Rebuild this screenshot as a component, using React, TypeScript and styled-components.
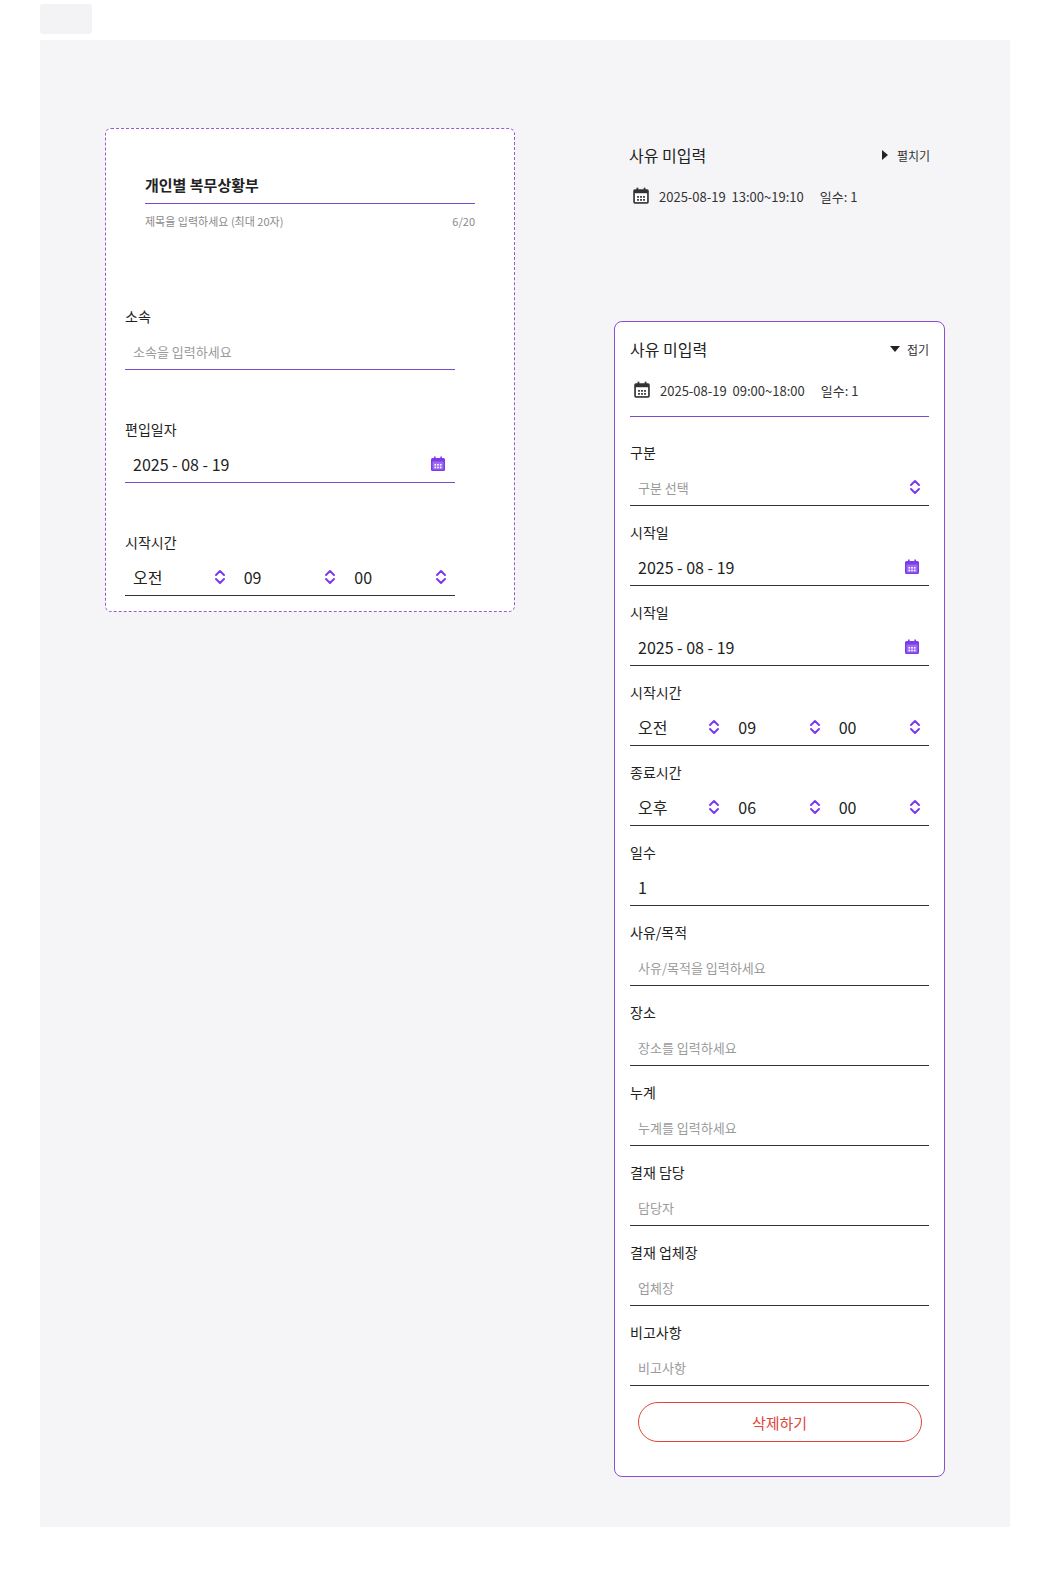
import styled, { createGlobalStyle } from 'styled-components';

const GlobalStyle = createGlobalStyle`
  html, body { overflow: hidden; }
  body {
    margin: 0;
    background: #fff;
    font-family: "Noto Sans CJK KR", "Noto Sans", sans-serif;
    color: #222;
  }
`;

const Page = styled.div`
  width: 1062px;
  padding: 4px 0 0 40px;
  box-sizing: border-box;
`;

const Tab = styled.div`
  width: 52px;
  height: 30px;
  background: #f3f3f6;
  border-radius: 3px;
  margin-bottom: 6px;
`;

const Canvas = styled.div`
  width: 970px;
  height: 1487px;
  background: #f5f5f8;
  display: flex;
  align-items: flex-start;
  gap: 99px;
  padding: 88px 0 0 65px;
  box-sizing: border-box;
`;

const DashedCard = styled.div`
  width: 410px;
  height: 484px;
  flex-shrink: 0;
  box-sizing: border-box;
  background: #fff;
  border: 1px dashed #9b59c9;
  border-radius: 6px;
  padding: 45px 59px 0 19px;
`;

const TitleBlock = styled.div`
  padding-left: 20px;
  margin-right: -20px;
`;

const TitleInput = styled.div`
  font-size: 15px;
  font-weight: 700;
  padding: 0 0 8px;
  border-bottom: 1px solid #7b4bc9;
`;

const TitleHint = styled.div`
  display: flex;
  justify-content: space-between;
  font-size: 11px;
  color: #8a8a8a;
  margin-top: 9px;
`;

const Column = styled.div`
  width: 331px;
  flex-shrink: 0;
  display: flex;
  flex-direction: column;
`;

const Summary = styled.div`
  padding: 14px 15px 0;
`;

const Card = styled.div`
  margin-top: 115px;
  background: #fff;
  border: 1px solid #8a4fd0;
  border-radius: 8px;
  padding: 14px 15px 34px;
`;

const HeadRow = styled.div`
  display: flex;
  justify-content: space-between;
  align-items: center;
  height: 26px;
`;

const HeadTitle = styled.div`
  font-size: 16px;
  color: #222;
`;

const Toggle = styled.div`
  display: flex;
  align-items: center;
  gap: 6px;
  font-size: 12px;
  color: #333;
`;

const Meta = styled.div<{ $line?: boolean }>`
  display: flex;
  align-items: center;
  gap: 8px;
  font-size: 13px;
  color: #333;
  margin-top: 18px;
  padding: 0 0 ${({ $line }) => ($line ? '16px' : '0')} 2px;
  border-bottom: ${({ $line }) => ($line ? '1px solid #7b4bc9' : 'none')};
  span + span { margin-left: 8px; }
`;

const Field = styled.div<{ $gap?: number }>`
  margin-top: ${({ $gap }) => $gap ?? 17}px;
`;

const Label = styled.div`
  font-size: 14px;
  color: #222;
  line-height: 18px;
`;

const Line = styled.div<{ $accent?: boolean }>`
  margin-top: 8px;
  height: 36px;
  display: flex;
  align-items: center;
  padding: 0 8px;
  border-bottom: 1px solid ${({ $accent }) => ($accent ? '#7b4bc9' : '#333')};
`;

const Value = styled.div<{ $muted?: boolean }>`
  flex: 1;
  font-size: ${({ $muted }) => ($muted ? 13 : 16)}px;
  color: ${({ $muted }) => ($muted ? '#9a9a9a' : '#222')};
`;

const Seg = styled.div`
  flex: 1;
  display: flex;
  align-items: center;
  font-size: 16px;
  & + & { margin-left: 18px; }
  span { flex: 1; }
`;

const DeleteButton = styled.button`
  display: block;
  width: 284px;
  height: 40px;
  margin: 16px auto 0;
  background: #fff;
  border: 1px solid #e0453a;
  border-radius: 20px;
  color: #e0453a;
  font-size: 15px;
  font-family: inherit;
`;

const Updown = () => (
  <svg width="12" height="16" viewBox="0 0 12 16" fill="none" stroke="#7c3aed" strokeWidth="2" strokeLinecap="round" strokeLinejoin="round">
    <path d="M2 6l4-4 4 4M2 10l4 4 4-4" />
  </svg>
);

const Cal = ({ color = '#7c3aed', size = 18 }: { color?: string; size?: number }) => (
  <svg width={size} height={size} viewBox="0 0 18 18">
    <rect x="2" y="3" width="14" height="13" rx="1.5" fill={color} />
    <rect x="5" y="1.5" width="1.6" height="3" fill={color} />
    <rect x="11.4" y="1.5" width="1.6" height="3" fill={color} />
    <rect x="3.5" y="6.5" width="11" height="8" fill="#fff" opacity={color === '#7c3aed' ? 0.25 : 1} />
    {[5.5, 8.2, 10.9].map((x) => [9, 11.7].map((y) => (
      <rect key={`${x}-${y}`} x={x} y={y} width="1.6" height="1.6" fill={color === '#7c3aed' ? '#fff' : color} />
    )))}
  </svg>
);

const Tri = ({ down }: { down?: boolean }) => (
  <svg width="12" height="12" viewBox="0 0 12 12">
    <path d={down ? 'M1 3h10L6 9z' : 'M3 1v10l6-5z'} fill="#222" />
  </svg>
);

const Time = ({ a, h, m }: { a: string; h: string; m: string }) => (
  <>
    <Seg><span>{a}</span><Updown /></Seg>
    <Seg><span>{h}</span><Updown /></Seg>
    <Seg><span>{m}</span><Updown /></Seg>
  </>
);

const fields: [string, string][] = [
  ['사유/목적', '사유/목적을 입력하세요'],
  ['장소', '장소를 입력하세요'],
  ['누계', '누계를 입력하세요'],
  ['결재 담당', '담당자'],
  ['결재 업체장', '업체장'],
  ['비고사항', '비고사항'],
];

export default function App() {
  return (
    <Page>
      <GlobalStyle />
      <Tab />
      <Canvas>
        <DashedCard>
          <TitleBlock>
            <TitleInput>개인별 복무상황부</TitleInput>
            <TitleHint>
              <span>제목을 입력하세요 (최대 20자)</span>
              <span>6/20</span>
            </TitleHint>
          </TitleBlock>
          <Field $gap={78}>
            <Label>소속</Label>
            <Line $accent><Value $muted>소속을 입력하세요</Value></Line>
          </Field>
          <Field $gap={50}>
            <Label>편입일자</Label>
            <Line $accent><Value>2025 - 08 - 19</Value><Cal /></Line>
          </Field>
          <Field $gap={50}>
            <Label>시작시간</Label>
            <Line><Time a="오전" h="09" m="00" /></Line>
          </Field>
        </DashedCard>

        <Column>
          <Summary>
            <HeadRow>
              <HeadTitle>사유 미입력</HeadTitle>
              <Toggle><Tri />펼치기</Toggle>
            </HeadRow>
            <Meta>
              <Cal color="#333" size={20} />
              <span>2025-08-19&nbsp;&nbsp;13:00~19:10</span>
              <span>일수: 1</span>
            </Meta>
          </Summary>

          <Card>
            <HeadRow>
              <HeadTitle>사유 미입력</HeadTitle>
              <Toggle><Tri down />접기</Toggle>
            </HeadRow>
            <Meta $line>
              <Cal color="#333" size={20} />
              <span>2025-08-19&nbsp;&nbsp;09:00~18:00</span>
              <span>일수: 1</span>
            </Meta>
            <Field $gap={26}>
              <Label>구분</Label>
              <Line><Value $muted>구분 선택</Value><Updown /></Line>
            </Field>
            <Field>
              <Label>시작일</Label>
              <Line><Value>2025 - 08 - 19</Value><Cal /></Line>
            </Field>
            <Field>
              <Label>시작일</Label>
              <Line><Value>2025 - 08 - 19</Value><Cal /></Line>
            </Field>
            <Field>
              <Label>시작시간</Label>
              <Line><Time a="오전" h="09" m="00" /></Line>
            </Field>
            <Field>
              <Label>종료시간</Label>
              <Line><Time a="오후" h="06" m="00" /></Line>
            </Field>
            <Field>
              <Label>일수</Label>
              <Line><Value>1</Value></Line>
            </Field>
            {fields.map(([l, p]) => (
              <Field key={l}>
                <Label>{l}</Label>
                <Line><Value $muted>{p}</Value></Line>
              </Field>
            ))}
            <DeleteButton>삭제하기</DeleteButton>
          </Card>
        </Column>
      </Canvas>
    </Page>
  );
}
